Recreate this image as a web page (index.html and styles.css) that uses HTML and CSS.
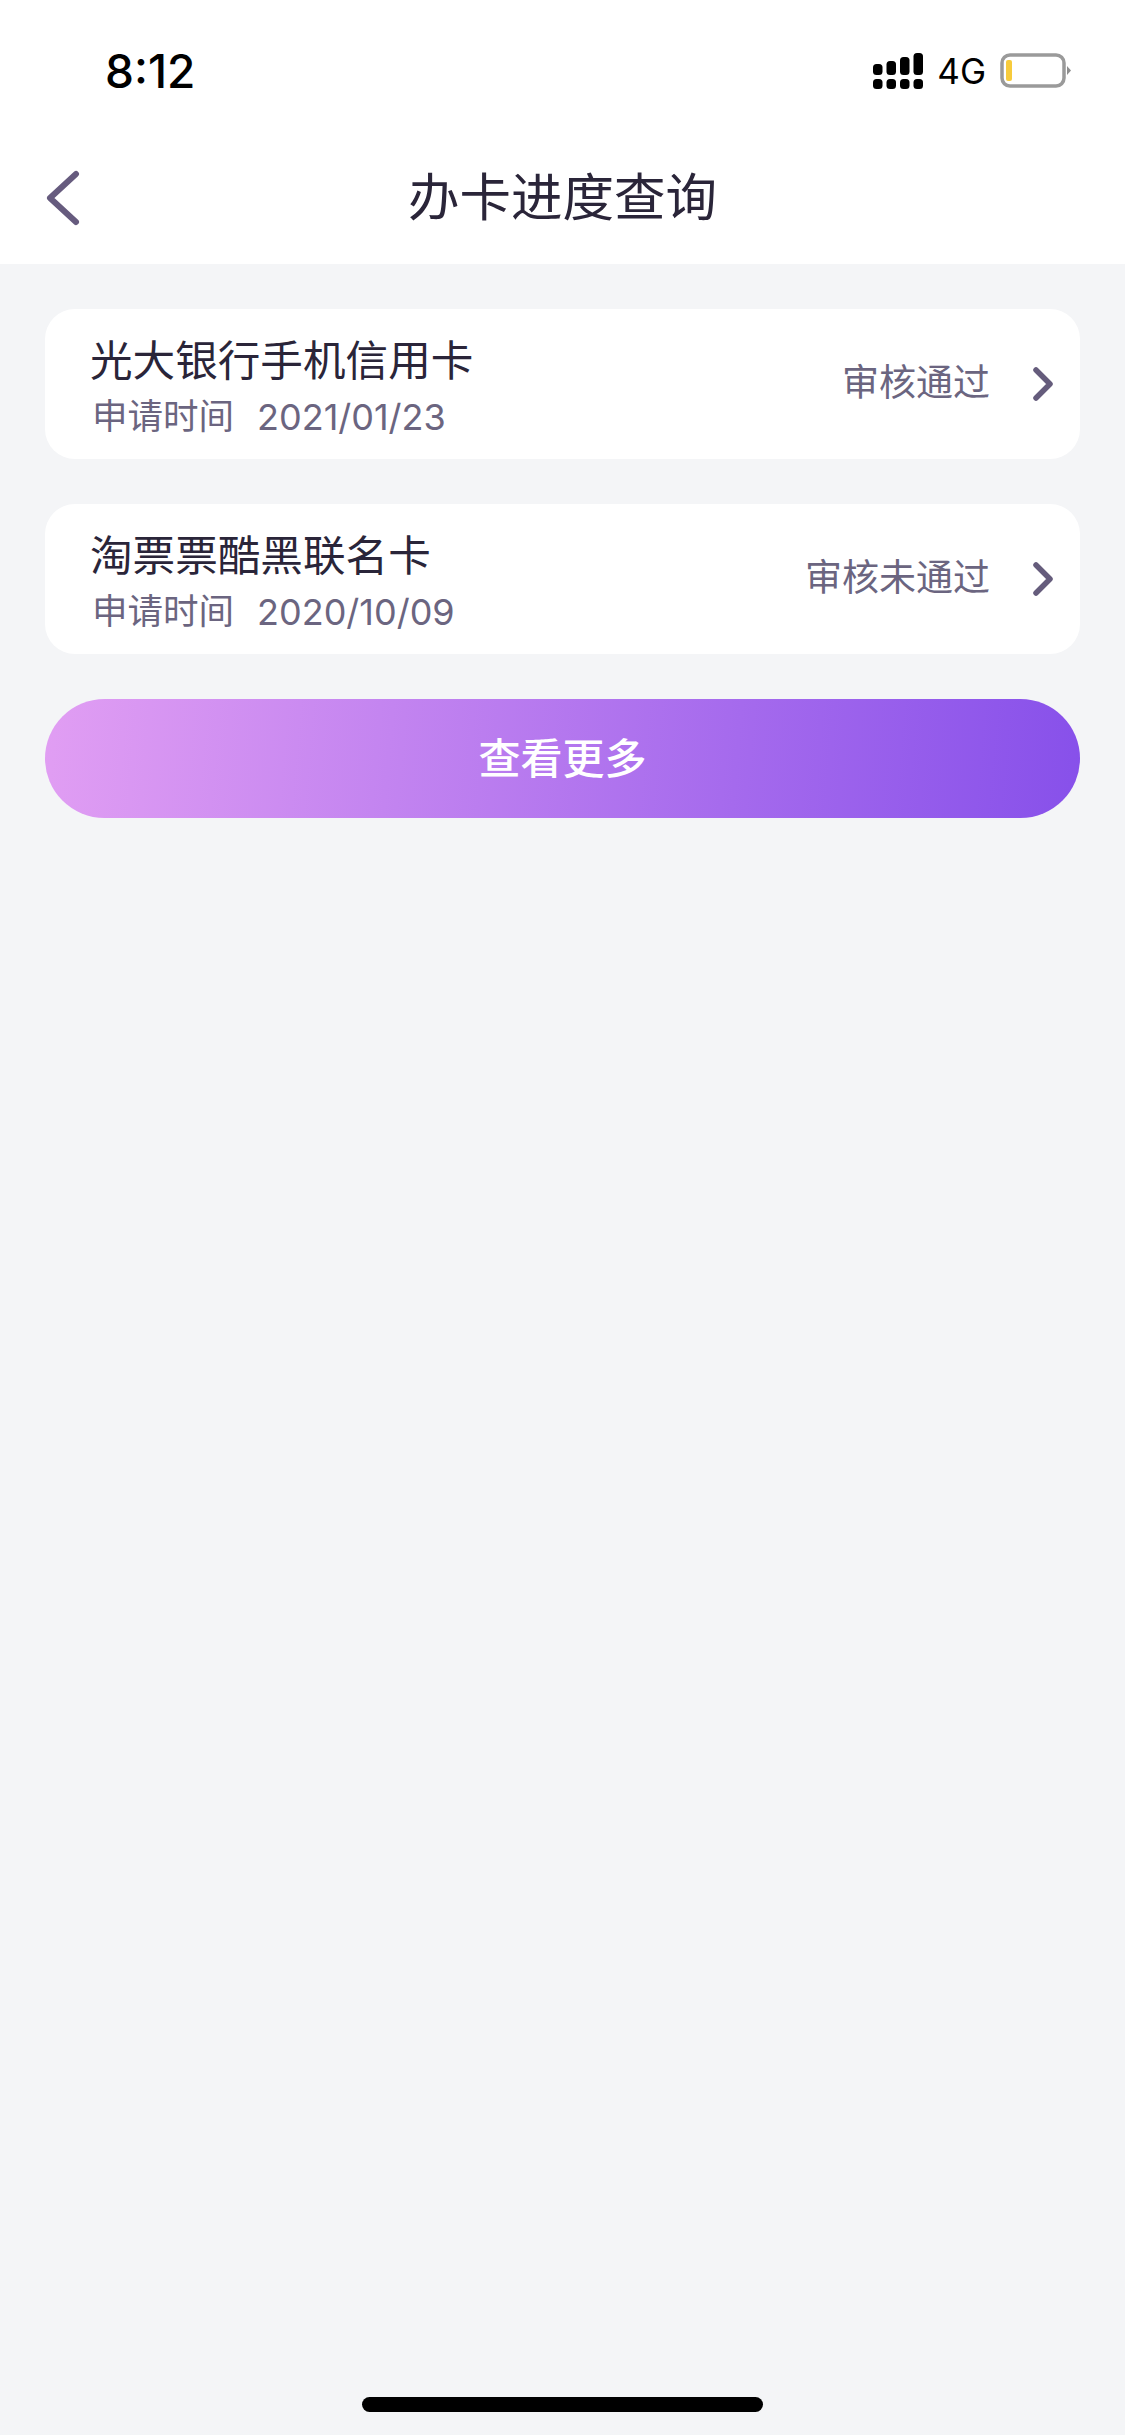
FILE: index.html
```html
<!DOCTYPE html>
<html lang="zh-CN">
<head>
<meta charset="utf-8">
<title>办卡进度查询</title>
<link rel="stylesheet" href="styles.css">
</head>
<body>
<div class="screen">
  <header class="top">
    <div class="status">
      <span class="time">8:12</span>
      <div class="status-right">
        <svg class="signal" width="50" height="36" viewBox="0 0 50 36">
          <rect x="0" y="11" width="9.5" height="11" rx="3.5" />
          <rect x="13.5" y="8" width="9.5" height="14" rx="3.5" />
          <rect x="27" y="4" width="9.5" height="18" rx="3.5" />
          <rect x="40.5" y="0" width="9.5" height="22" rx="3.5" />
          <rect x="0" y="26" width="9.5" height="10" rx="3.5" />
          <rect x="13.5" y="26" width="9.5" height="10" rx="3.5" />
          <rect x="27" y="26" width="9.5" height="10" rx="3.5" />
          <rect x="40.5" y="26" width="9.5" height="10" rx="3.5" />
        </svg>
        <span class="net">4G</span>
        <svg class="battery" width="72" height="36" viewBox="0 0 72 36">
          <rect x="2" y="2" width="62" height="31" rx="8" fill="none" stroke="#9a9a9a" stroke-width="3.5"/>
          <rect x="6" y="7" width="6" height="21" rx="2" fill="#f7cb3c"/>
          <path d="M67 13 L71 17.5 L67 22 Z" fill="#8e8e8e"/>
        </svg>
      </div>
    </div>
    <div class="nav">
      <svg class="back" width="36" height="56" viewBox="0 0 36 56">
        <path d="M30 4 L4 28 L30 52" fill="none" stroke="#665b7e" stroke-width="6" stroke-linecap="round" stroke-linejoin="round"/>
      </svg>
      <h1 class="title">办卡进度查询</h1>
    </div>
  </header>

  <main class="content">
    <section class="card">
      <div class="info">
        <div class="name">光大银行手机信用卡</div>
        <div class="meta"><span class="meta-label">申请时间</span><span class="meta-date">2021/01/23</span></div>
      </div>
      <span class="state">审核通过</span>
      <svg class="chev" width="20" height="34" viewBox="0 0 20 34">
        <path d="M3 3 L17 17 L3 31" fill="none" stroke="#655c7c" stroke-width="5.5" stroke-linecap="round" stroke-linejoin="round"/>
      </svg>
    </section>
    <section class="card">
      <div class="info">
        <div class="name">淘票票酷黑联名卡</div>
        <div class="meta"><span class="meta-label">申请时间</span><span class="meta-date">2020/10/09</span></div>
      </div>
      <span class="state">审核未通过</span>
      <svg class="chev" width="20" height="34" viewBox="0 0 20 34">
        <path d="M3 3 L17 17 L3 31" fill="none" stroke="#655c7c" stroke-width="5.5" stroke-linecap="round" stroke-linejoin="round"/>
      </svg>
    </section>
    <button class="more" type="button">查看更多</button>
  </main>

  <div class="home-bar"></div>
</div>
</body>
</html>
```
FILE: styles.css
```css
* { box-sizing: border-box; }
html, body { margin: 0; padding: 0; }
body {
  background: #f4f5f7;
  font-family: "Inter", "Noto Sans CJK SC", sans-serif;
}
.screen {
  width: 1125px;
  height: 2435px;
  display: flex;
  flex-direction: column;
  overflow: hidden;
}
.top {
  height: 264px;
  background: #fff;
  display: flex;
  flex-direction: column;
}
.status {
  height: 132px;
  padding: 38px 53px 0 105px;
  display: flex;
  justify-content: space-between;
  align-items: flex-start;
}
.time {
  font-size: 46px;
  line-height: 66px;
  font-weight: 500;
  color: #000;
}
.status-right {
  display: flex;
  align-items: center;
  height: 66px;
}
.signal { fill: #000; margin-right: 14px; }
.net {
  font-family: "Inter", sans-serif;
  font-size: 35px;
  color: #000;
  margin-right: 14px;
}
.nav {
  position: relative;
  height: 132px;
  display: flex;
  align-items: center;
  justify-content: center;
}
.back {
  position: absolute;
  left: 46px;
  top: 38px;
}
.title {
  margin: -2px 0 0;
  font-size: 51.5px;
  font-weight: 400;
  color: #2a2539;
  line-height: 70px;
}
.content {
  flex: 1;
  padding: 45px 45px 0;
  display: flex;
  flex-direction: column;
  gap: 45px;
}
.card {
  height: 150px;
  background: #fff;
  border-radius: 30px;
  padding: 0 27px 0 45px;
  display: flex;
  align-items: center;
}
.info { flex: 1; padding-top: 6px; }
.name {
  font-size: 42.6px;
  line-height: 54px;
  color: #2a2539;
}
.meta {
  display: flex;
  gap: 23px;
  font-size: 36px;
  line-height: 46px;
  color: #6b6580;
  margin-top: 6px;
}
.meta-label { font-size: 35.5px; margin-left: 2px; }
.state {
  font-size: 37px;
  color: #6b6580;
  margin-right: 43px;
  margin-top: -8px;
}
.chev { display: block; }
.more {
  height: 119px;
  border: 0;
  border-radius: 60px;
  background: linear-gradient(95deg, #e19ef3 0%, #8750ea 100%);
  color: #fff;
  font-family: inherit;
  font-size: 42px;
  font-weight: 500;
  padding: 0 0 6px;
}
.home-bar {
  position: absolute;
  left: 362px;
  top: 2397px;
  width: 401px;
  height: 15px;
  border-radius: 8px;
  background: #000;
}
```
